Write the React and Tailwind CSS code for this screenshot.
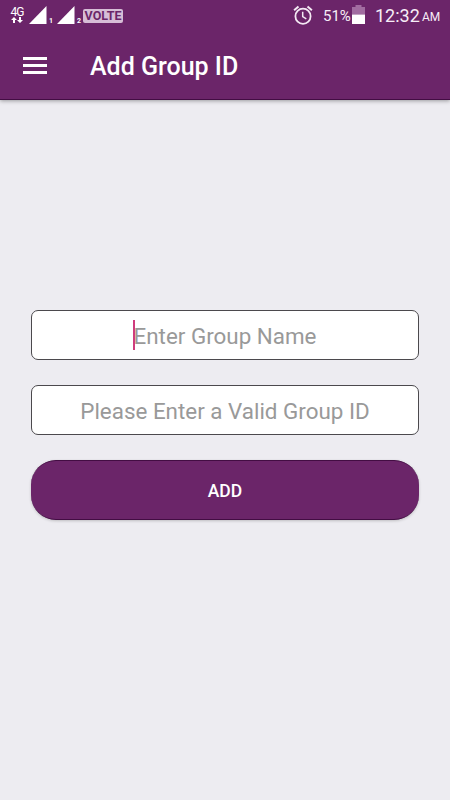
function SignalIcon({ sim }) {
  return (
    <div className="flex items-end">
      <svg className="h-[18px] w-[18px]" viewBox="0 0 18 18" fill="#fff">
        <path d="M17.5 0v18H0z" />
      </svg>
      <span className="ml-[2px] w-[5px] text-[7px] leading-[6px] font-bold">{sim}</span>
    </div>
  );
}

function NetworkType() {
  return (
    <div className="flex w-[14px] flex-col items-center">
      <span className="text-[12px] leading-[10px] tracking-[-0.9px]">4G</span>
      <svg className="h-[6px] w-[12px]" viewBox="0 0 12 6" fill="#fff">
        <path d="M3 0l3 3H4v3H2V3H0zM9 6L6 3h2V0h2v3h2z" />
      </svg>
    </div>
  );
}

function AlarmIcon() {
  return (
    <svg className="h-[20px] w-[20px]" viewBox="0 0 20 20" fill="none" stroke="#f3e8f3" strokeWidth="1.8">
      <circle cx="10" cy="11.2" r="7.6" />
      <path d="M1.1 5.3l4.4-3.8M18.9 5.3l-4.4-3.8" strokeWidth="2" />
      <path d="M9.7 6.7v5l3.6 2.2" strokeWidth="1.5" />
    </svg>
  );
}

function BatteryIcon() {
  return (
    <svg className="h-[19px] w-[13px]" viewBox="0 0 13 19">
      <path d="M3.5 0h6v2H13v7.5H0V2h3.5z" fill="#a16ca0" />
      <path d="M0 9.5h13V19H0z" fill="#fff" />
    </svg>
  );
}

function StatusBar() {
  return (
    <div className="flex h-8 justify-between pr-[10px] pl-[10px]">
      <div className="flex items-start">
        <div className="mt-[7px]">
          <NetworkType />
        </div>
        <div className="mt-[6px] ml-[5px]">
          <SignalIcon sim="1" />
        </div>
        <div className="mt-[6px] ml-[3px]">
          <SignalIcon sim="2" />
        </div>
        <span className="mt-[9px] ml-[1px] flex h-[14px] w-[40px] items-center justify-center rounded-[2px] bg-[#d6bdd6] text-[12.5px] leading-none font-bold text-[#6b2569]">
          VOLTE
        </span>
      </div>
      <div className="flex items-start text-[#f7edf7]">
        <div className="mt-[5px]">
          <AlarmIcon />
        </div>
        <span className="mt-[7px] ml-[10px] w-[28px] text-[15px] leading-[18px] whitespace-nowrap">51%</span>
        <div className="mt-[5px] ml-[1px]">
          <BatteryIcon />
        </div>
        <span className="mt-[5px] ml-[10px] w-[44px] text-[18px] leading-[22px]">12:32</span>
        <span className="mt-[9px] ml-[3px] w-[18px] text-[12px] leading-[17px]">AM</span>
      </div>
    </div>
  );
}

function Field({ placeholder, focused }) {
  return (
    <div className="flex h-[50px] items-center justify-center rounded-[7px] border border-[#4b494d] bg-white pt-[3px] text-[22.4px] text-[#999]">
      <span className="relative whitespace-nowrap">
        {placeholder}
        {focused && <span className="absolute top-0 left-[-1px] h-[30px] w-[2.6px] bg-[#cf3c7d]" />}
      </span>
    </div>
  );
}

export default function App() {
  return (
    <div className="h-[800px] w-[450px] overflow-hidden bg-[#edecf1] font-['Roboto',sans-serif]">
      <header className="h-[100px] border-b border-[#430d43] bg-[#6b2569] text-white shadow-[0_1px_4px_rgba(0,0,0,0.35)]">
        <StatusBar />
        <div className="flex h-[67px] items-center pl-[23px]">
          <button className="flex w-6 flex-col gap-[4px]" aria-label="Menu">
            <span className="h-[3px] w-6 bg-white" />
            <span className="h-[3px] w-6 bg-white" />
            <span className="h-[3px] w-6 bg-white" />
          </button>
          <h1 className="ml-[43px] pt-[2px] text-[25px] font-medium">Add Group ID</h1>
        </div>
      </header>

      <main className="flex flex-col gap-[25px] pt-[210px] pr-[31px] pl-[31px]">
        <Field placeholder="Enter Group Name" focused />
        <Field placeholder="Please Enter a Valid Group ID" />
        <button className="h-[60px] rounded-[25px] border-y border-[#430d43] bg-[#6b2569] pt-[2px] text-[17.5px] font-medium text-white shadow-[0_1px_3px_rgba(0,0,0,0.2)]">
          ADD
        </button>
      </main>
    </div>
  );
}
